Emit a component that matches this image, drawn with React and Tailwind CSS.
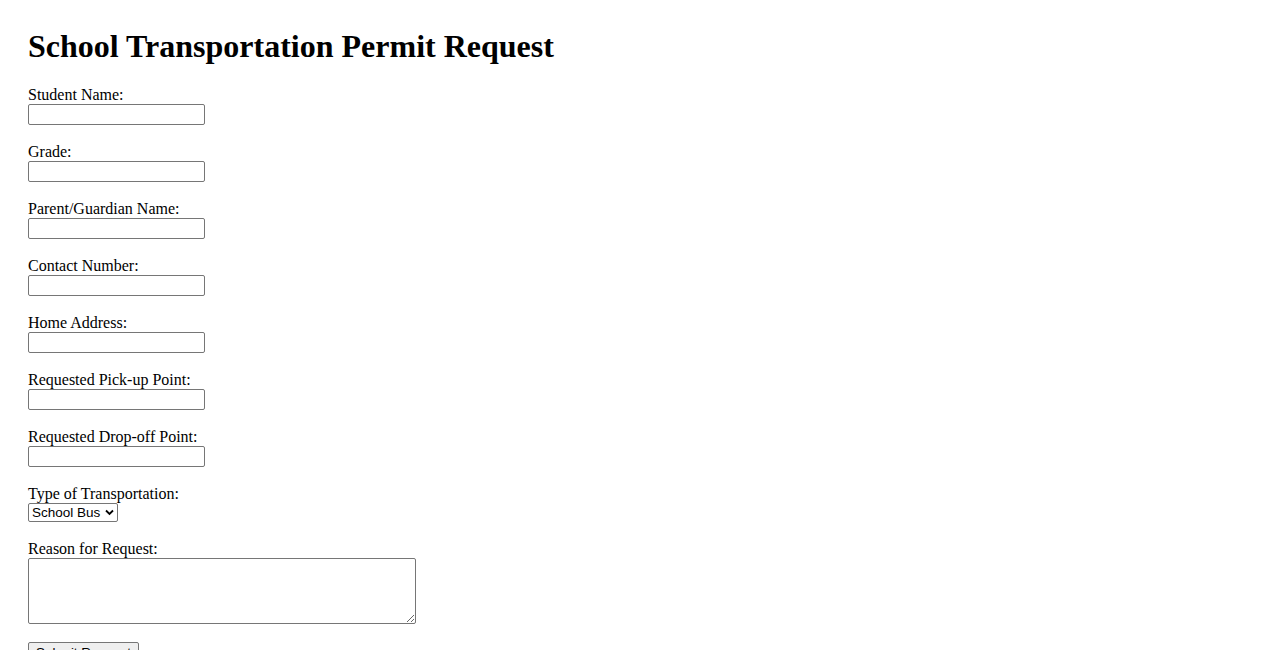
import React from "react";

const fields = [
  "Student Name:",
  "Grade:",
  "Parent/Guardian Name:",
  "Contact Number:",
  "Home Address:",
  "Requested Pick-up Point:",
  "Requested Drop-off Point:",
];

export default function App() {
  return (
    <div className="min-h-screen bg-white text-black pt-[28px] pl-[28px] font-['Liberation_Serif',serif]">
      <h1 className="text-[32px] font-bold leading-[37px] mb-[21px]">School Transportation Permit Request</h1>
      <form className="flex flex-col items-start">
        {fields.map((f) => (
          <div key={f} className="flex flex-col items-start mb-[18px]">
            <label className="text-[16px] leading-[18px]">{f}</label>
            <input
              type="text"
              className="block w-[177px] h-[21px] border border-[#767676] rounded-[2px] bg-white px-[2px] text-[13.33px] font-['Liberation_Sans',sans-serif]"
            />
          </div>
        ))}
        <div className="flex flex-col items-start mb-[18px]">
          <label className="text-[16px] leading-[18px]">Type of Transportation:</label>
          <div className="relative block w-[90px] h-[19px]">
            <select className="block appearance-none w-full h-[19px] border border-[#767676] rounded-[2px] bg-white pl-[3px] pr-[12px] text-[13.5px] leading-[17px] font-['Liberation_Sans',sans-serif] text-black">
              <option>School Bus</option>
              <option>Van</option>
              <option>Private Vehicle</option>
            </select>
            <svg className="absolute right-[4px] top-[6px] pointer-events-none" width="9" height="7" viewBox="0 0 9 7">
              <path d="M1 1.5 L4.5 5 L8 1.5" stroke="#000" strokeWidth="1.8" fill="none" />
            </svg>
          </div>
        </div>
        <div className="flex flex-col items-start mb-[18px]">
          <label className="text-[16px] leading-[18px]">Reason for Request:</label>
          <textarea className="block w-[388px] h-[66px] border border-[#767676] rounded-[2px] bg-white p-[2px] text-[13.33px] font-['Liberation_Mono',monospace]" />
        </div>
        <button
          type="button"
          className="block w-[111px] h-[21px] border border-[#767676] rounded-[2px] bg-[#efefef] text-[13.33px] leading-[17px] font-['Liberation_Sans',sans-serif] text-black px-[6px]"
        >
          Submit Request
        </button>
      </form>
    </div>
  );
}
